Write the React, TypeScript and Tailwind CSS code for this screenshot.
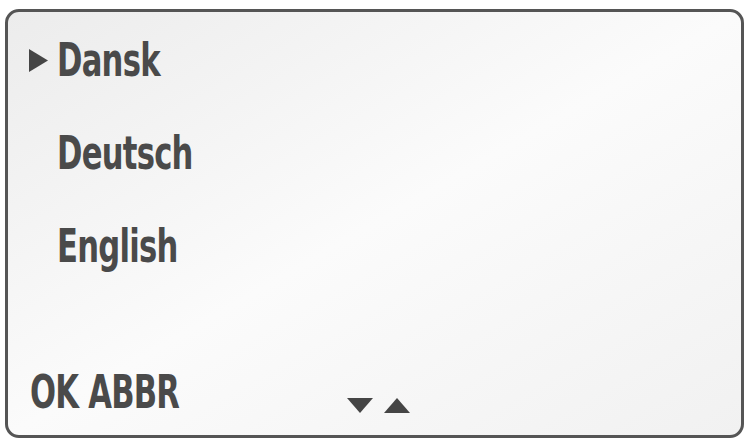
export default function App() {
  const font = { fontFamily: '"DejaVu Sans Condensed", "Liberation Sans", sans-serif' };
  return (
    <div className="h-[440px] w-[748px] bg-white pb-[2px] pl-[5px] pr-[4px] pt-[9px]" style={font}>
      {/* SCREEN */}
      <div className="flex h-full flex-col rounded-[14px] border-[3px] border-[#555] bg-linear-to-br from-[#ececec] via-[#fbfbfb] to-[#f1f1f1] text-[46px] font-bold leading-[93px] tracking-[-1px] text-[#4a4a4a]">
        <div className="mt-[2px] flex items-center">
          <svg className="ml-[20px] mr-[9px] h-[23px] w-[20px]" viewBox="0 0 20 23">
            <path d="M1 0 L20 11.5 L1 23 Z" fill="#454545" />
          </svg>
          <span className="inline-block origin-left scale-x-[0.74]">Dansk</span>
        </div>
        <div className="pl-[49px]">
          <span className="inline-block origin-left scale-x-[0.74]">Deutsch</span>
        </div>
        <div className="pl-[49px]">
          <span className="inline-block origin-left scale-x-[0.74]">English</span>
        </div>
        <div className="mt-auto mb-[4px] flex items-end pl-[22px] leading-[77px]">
          <span className="w-[317px]">
            <span className="inline-block origin-left scale-x-[0.74]">OK ABBR</span>
          </span>
          <div className="mb-[18px] flex items-end gap-[11px]">
            <svg className="h-[15px] w-[26px]" viewBox="0 0 26 15">
              <path d="M0 0 L26 0 L13 15 Z" fill="#454545" />
            </svg>
            <svg className="h-[15px] w-[26px]" viewBox="0 0 26 15">
              <path d="M0 15 L26 15 L13 0 Z" fill="#454545" />
            </svg>
          </div>
        </div>
      </div>
    </div>
  );
}
